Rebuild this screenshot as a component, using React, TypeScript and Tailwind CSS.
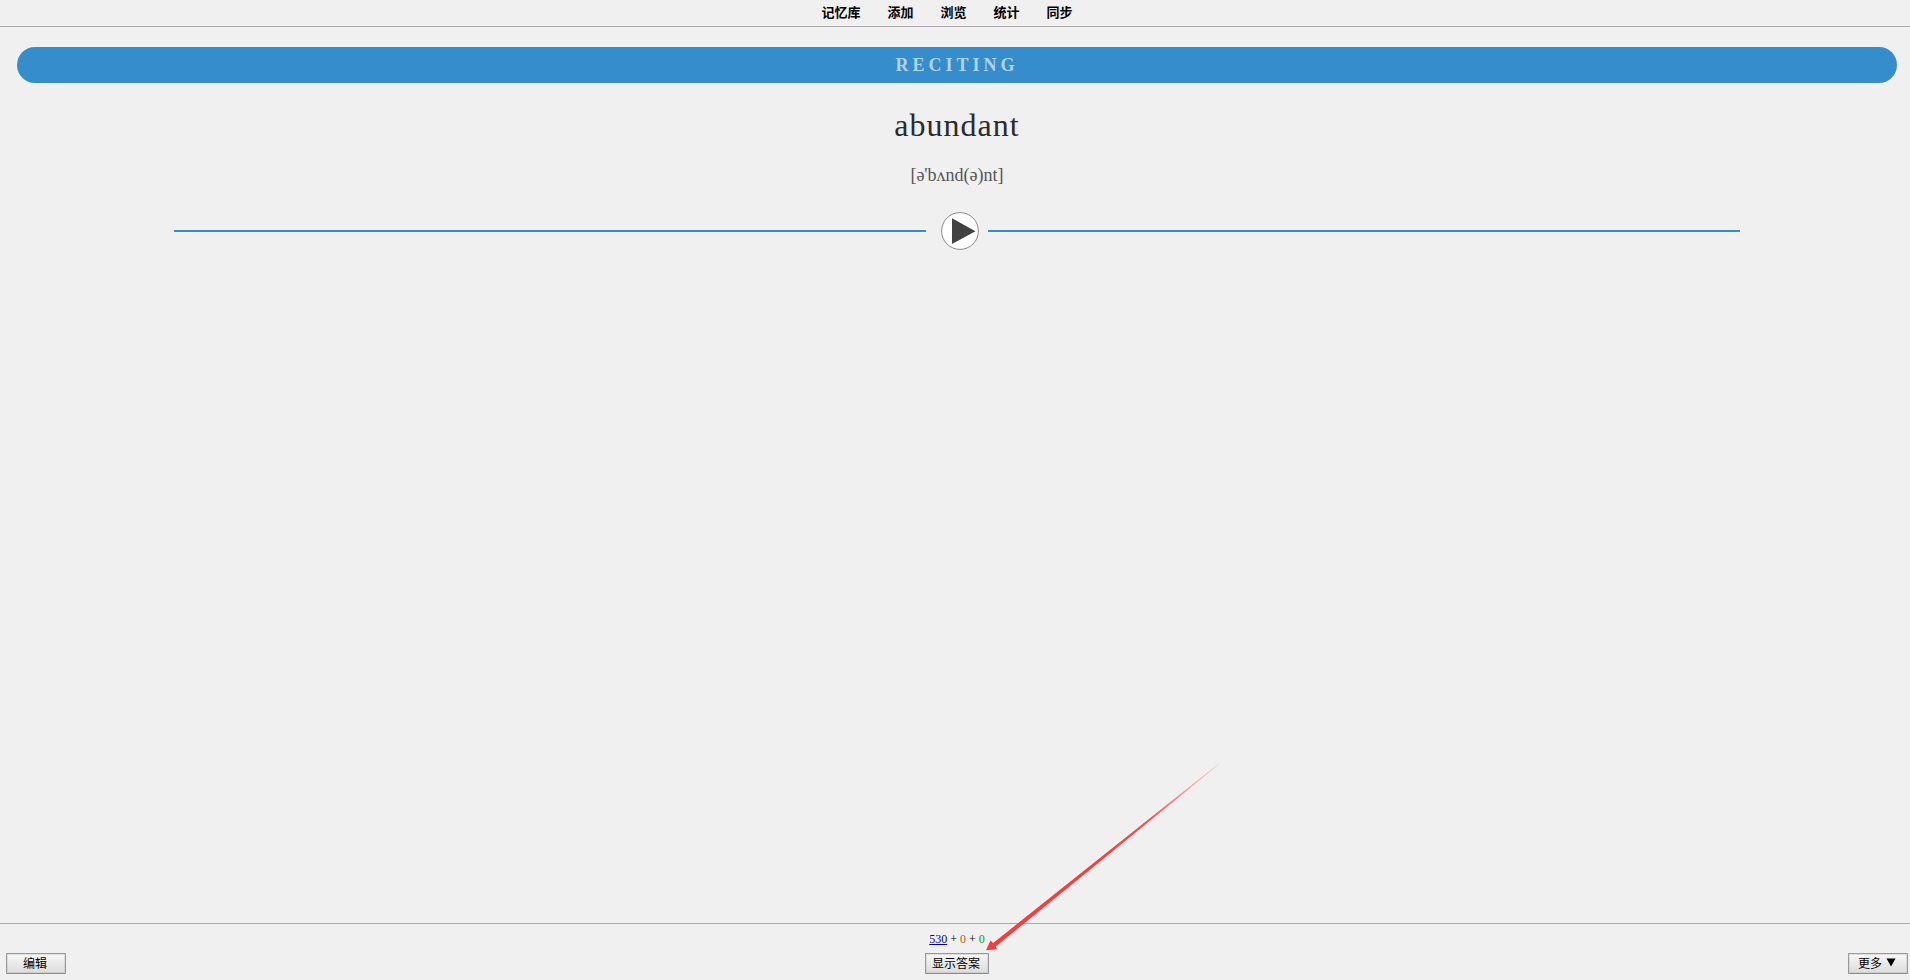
const navItems = ["记忆库", "添加", "浏览", "统计", "同步"];

const buttonClass =
  "flex h-[21px] items-center justify-center gap-1 whitespace-nowrap rounded-[1px] border border-[#999] border-b-[#8c8c8c] bg-linear-to-b from-[#f7f7f7] to-[#dcdcdc] pr-0.5 pb-0.5 text-xs leading-none text-black shadow-[inset_0_0_0_1px_rgba(160,160,160,0.25)]";

function PointerArrow() {
  return (
    <svg
      className="pointer-events-none absolute bottom-5 left-[60px] h-[192px] w-[236px]"
      viewBox="0 0 236 192"
      aria-hidden="true"
    >
      <defs>
        <linearGradient id="arrow-fade" gradientUnits="userSpaceOnUse" x1="234" y1="2" x2="1" y2="188">
          <stop offset="0" stopColor="#ff3b3b" stopOpacity="0.1" />
          <stop offset="0.3" stopColor="#fd3a3a" stopOpacity="0.9" />
          <stop offset="0.5" stopColor="#fd3a3a" />
        </linearGradient>
      </defs>
      <path
        d="M234 1.2 L234.6 2 L10.8 184.4 L11.9 187.2 L1 188.2 L5.4 178.4 L8.2 180.9 Z"
        fill="url(#arrow-fade)"
      />
    </svg>
  );
}

export default function App() {
  return (
    <div className="flex min-h-screen flex-col bg-[#f0f0f0] font-['Liberation_Serif','Noto_Sans_CJK_SC',serif]">
      <header className="border-b border-[#aaa] pt-0.5 pb-1 pr-4">
        <nav className="flex justify-center gap-[27px] font-['Noto_Sans_CJK_SC',sans-serif] text-[13px] leading-5 font-bold text-black">
          {navItems.map((item) => (
            <a key={item} href="#">
              {item}
            </a>
          ))}
        </nav>
      </header>

      <main className="flex grow flex-col pt-5 pr-[13px] pl-[17px] text-center">
        <div className="rounded-full bg-[#358ecb] text-lg leading-9 font-bold tracking-[4px] text-[#b0d3ec]">
          RECITING
        </div>
        <h1 className="mt-[22px] text-[32px] leading-10 tracking-[1px] text-[#2b2b2b]">abundant</h1>
        <p className="mt-[18px] text-lg leading-6 text-[#555]">[ə'bʌnd(ə)nt]</p>
        <div className="mt-6 flex items-center justify-center">
          <div className="h-0.5 w-2/5 bg-[#358ecb]" />
          <button type="button" aria-label="播放" className="mr-2 ml-[15px] size-[39px] shrink-0">
            <svg viewBox="0 0 39 39" className="size-full">
              <circle cx="19" cy="20" r="18.4" fill="#fff" stroke="#8a8a8a" />
              <path d="M11 7.2 L34.5 20.2 L11 33 Z" fill="#414141" />
            </svg>
          </button>
          <div className="h-0.5 w-2/5 bg-[#358ecb]" />
        </div>
      </main>

      <footer className="grid grid-cols-[1fr_auto_1fr] items-end border-t border-[#aaa] pt-[7px] pr-0.5 pb-[6px] pl-[6px] font-['Noto_Sans_CJK_SC',sans-serif]">
        <button type="button" className={`${buttonClass} w-[60px]`}>
          编辑
        </button>
        <div className="relative flex flex-col items-center gap-[6px]">
          <p className="font-['Liberation_Serif',serif] text-xs leading-4 whitespace-nowrap text-black">
            <span className="text-[#0000aa] underline">530</span> + <span className="text-[#c35617]">0</span> +{" "}
            <span className="text-[#00a020]">0</span>
          </p>
          <button type="button" className={`${buttonClass} w-16`}>
            显示答案
          </button>
          <PointerArrow />
        </div>
        <button type="button" className={`${buttonClass} w-[60px] justify-self-end`}>
          更多
          <svg viewBox="0 0 10 9" className="h-[9px] w-2.5" aria-hidden="true">
            <path d="M0.5 0.5 H9.5 L5 8.5 Z" fill="#000" />
          </svg>
        </button>
      </footer>
    </div>
  );
}
